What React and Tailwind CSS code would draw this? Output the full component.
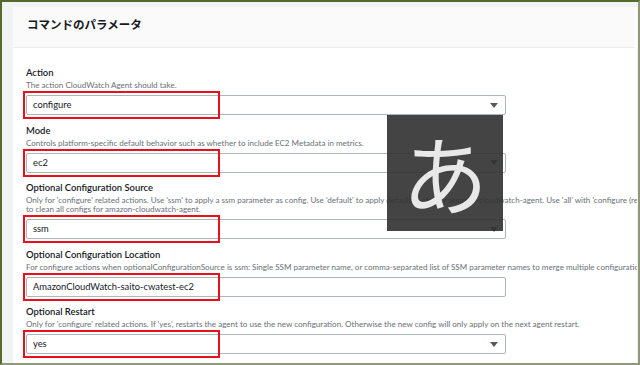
import React from "react";

const fields = [
  {
    label: "Action",
    desc: ["The action CloudWatch Agent should take."],
    value: "configure",
    select: true,
  },
  {
    label: "Mode",
    desc: [
      "Controls platform-specific default behavior such as whether to include EC2 Metadata in metrics.",
    ],
    value: "ec2",
    select: true,
  },
  {
    label: "Optional Configuration Source",
    desc: [
      "Only for 'configure' related actions. Use 'ssm' to apply a ssm parameter as config. Use 'default' to apply default config for amazon-cloudwatch-agent. Use 'all' with 'configure (remove)'",
      "to clean all configs for amazon-cloudwatch-agent.",
    ],
    value: "ssm",
    select: true,
  },
  {
    label: "Optional Configuration Location",
    desc: [
      "For configure actions when optionalConfigurationSource is ssm: Single SSM parameter name, or comma-separated list of SSM parameter names to merge multiple configuration files.",
    ],
    value: "AmazonCloudWatch-saito-cwatest-ec2",
    select: false,
  },
  {
    label: "Optional Restart",
    desc: [
      "Only for 'configure' related actions. If 'yes', restarts the agent to use the new configuration. Otherwise the new config will only apply on the next agent restart.",
    ],
    value: "yes",
    select: true,
  },
];

function Field({ f }) {
  return (
    <div className="flex flex-col">
      <div className="h-[13px] leading-[13px] text-[9.45px] font-semibold text-[#16191f] whitespace-nowrap">
        {f.label}
      </div>
      <div className="mt-[2px] flex flex-col">
        {f.desc.map((d, i) => (
          <div
            key={i}
            className="h-[9px] leading-[9px] text-[8.05px] text-[#687078] whitespace-nowrap"
          >
            {d}
          </div>
        ))}
      </div>
      <div className="relative mt-[5px] w-[480px]">
        <div className="h-[20px] w-[480px] flex items-center justify-between rounded-[2px] border border-[#aab7b8] bg-white pl-[6px] pr-[6px]">
          <span className="text-[9.35px] leading-[12px] text-[#16191f]">{f.value}</span>
          {f.select && (
            <svg width="8" height="5" viewBox="0 0 8 5" className="mr-[1px]">
              <polygon points="0,0 8,0 4,5" fill="#545b64" />
            </svg>
          )}
        </div>
        <div className="absolute -left-[3px] -top-[4px] w-[197px] h-[28px] border-2 border-[#e8101c]" />
      </div>
    </div>
  );
}

export default function App() {
  return (
    <div className="relative w-[640px] h-[365px] overflow-hidden bg-[#f2f3f3] border-t-2 border-l-2 border-r-2 border-b-2 border-t-[#566a2e] border-l-[#566a2e] border-r-[#8f9878] border-b-[#8f9878]">
      <div
        className="ml-[11px] mt-[5px] mr-[1px] h-[400px] bg-white overflow-hidden"
        style={{ fontFamily: "Lato, 'Noto Sans CJK JP', sans-serif" }}
      >
        <div className="h-[41px] mr-[2px] bg-[#fafafa] border-b border-[#eaeded] pl-[14px] pt-[9px]">
          <div
            className="text-[11.5px] leading-[16px] font-bold text-[#16191f]"
            style={{ fontFamily: "'Noto Sans CJK JP', sans-serif" }}
          >
            コマンドのパラメータ
          </div>
        </div>
        <div className="pl-[13px] pt-[18px] flex flex-col gap-[8.5px]">
          {fields.map((f, i) => (
            <Field key={i} f={f} />
          ))}
        </div>
      </div>
      <div className="absolute left-[385px] top-[113px] w-[116px] h-[116px] bg-[rgba(48,48,48,0.9)] flex items-center justify-center">
        <span
          className="text-[86px] leading-none text-[#e8e8e8] font-normal -mt-[2px]"
          style={{ fontFamily: "'Noto Sans CJK JP', sans-serif" }}
        >
          あ
        </span>
      </div>
    </div>
  );
}
